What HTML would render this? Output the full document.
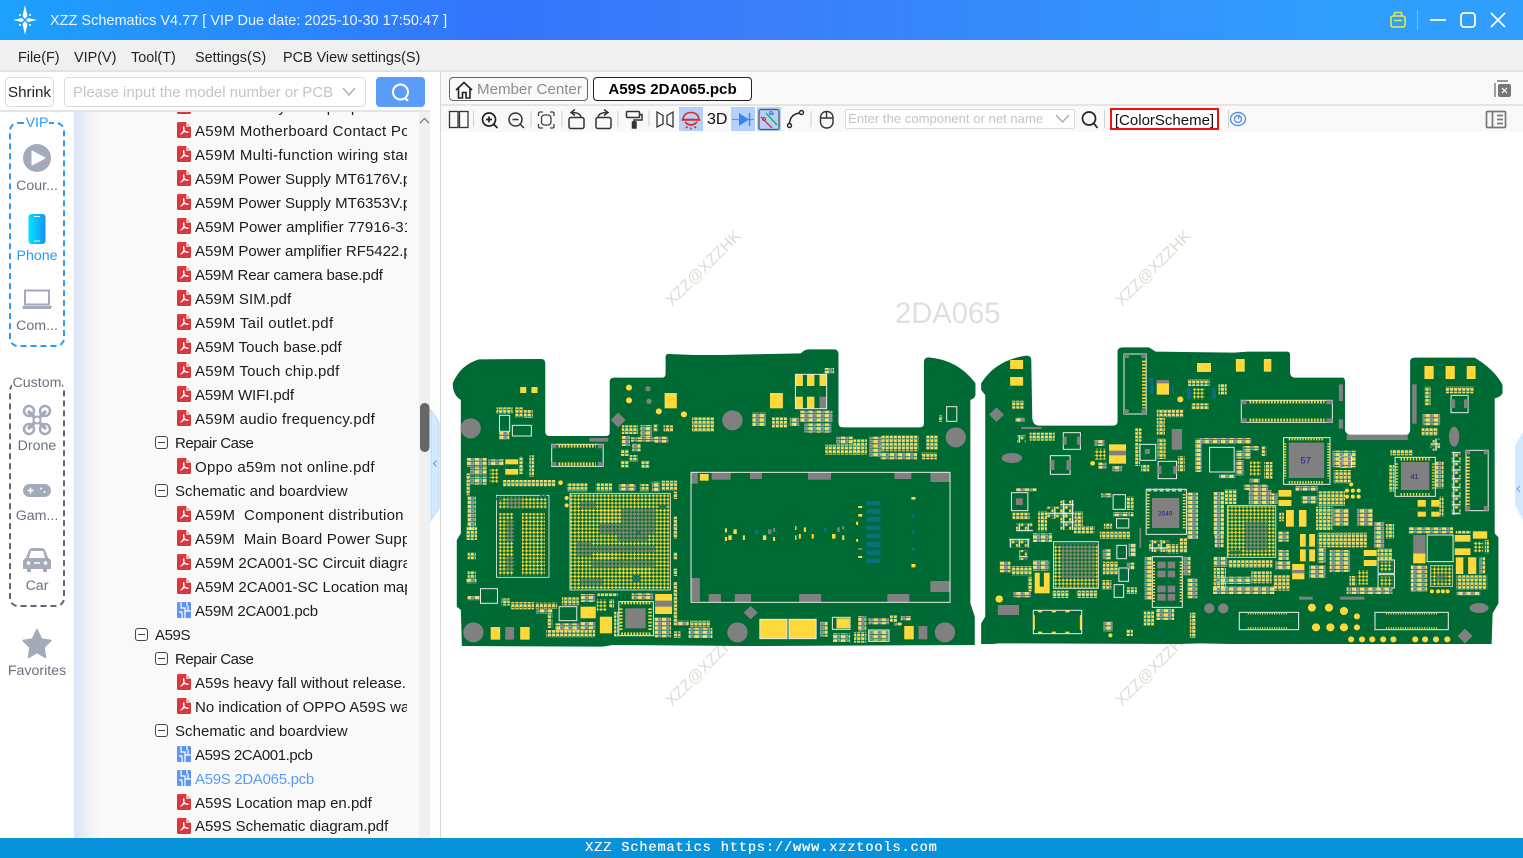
<!DOCTYPE html>
<html><head><meta charset="utf-8"><title>XZZ Schematics</title>
<style>
html,body{margin:0;padding:0;width:1523px;height:858px;overflow:hidden;background:#fff;font-family:"Liberation Sans","Noto Sans CJK SC",sans-serif;color:#222}
div,span{position:absolute;white-space:nowrap;box-sizing:border-box}
svg{position:absolute;left:0;top:0}
.m{top:48px;font-size:14.4px;line-height:20px;color:#222}
.r{left:0;font-size:15px;line-height:22px;color:#1c1c1c}
.n{font-size:14.2px;line-height:18px;width:74px;left:0;text-align:center;color:#69707f}
</style></head><body>
<!-- backgrounds -->
<div style="left:0;top:0;width:1523px;height:40px;background:linear-gradient(90deg,#1ca1fb 0,#3375fb 32%,#3a7ef8 50%,#2f9efd 88%,#2f9efd 100%)"></div>
<div style="left:0;top:40px;width:1523px;height:32px;background:#f0f0f0;border-bottom:2px solid #e2e2e2"></div>
<div style="left:0;top:72px;width:440px;height:40px;background:#fff;border-bottom:2px solid #e4e4e4"></div>
<div style="left:441px;top:72px;width:1082px;height:34px;background:#f9f9f9;border-bottom:2px solid #e4e4e4"></div>
<div style="left:441px;top:106px;width:1082px;height:26px;background:#f9f9f9"></div>
<div style="left:74px;top:112px;width:345px;height:726px;background:linear-gradient(90deg,#dbe4f4 0,#f2f4f8 18px,#f9f9f9 30px)"></div>
<div style="left:419px;top:112px;width:11px;height:726px;background:#f0f0f0"></div>
<div style="left:430px;top:72px;width:10px;height:766px;background:#fbfefb;"></div>
<div style="left:440px;top:72px;width:1px;height:766px;background:#d8d8d8"></div>
<div style="left:0;top:838px;width:1523px;height:20px;background:#0892d9"></div>
<!-- title -->
<div style="left:50px;top:11px;font-size:14.5px;line-height:20px;color:#eaf3ff">XZZ Schematics V4.77 [ VIP Due date: 2025-10-30 17:50:47 ]</div>
<!-- menu -->
<div class="m" style="left:18px">File(F)</div><div class="m" style="left:74px">VIP(V)</div><div class="m" style="left:131px">Tool(T)</div><div class="m" style="left:195px">Settings(S)</div><div class="m" style="left:283px">PCB View settings(S)</div>
<!-- search row -->
<div style="left:5px;top:77px;width:49px;height:30px;border:1px solid #ddd;border-radius:4px;font-size:15.2px;line-height:30px;text-align:center;color:#222">Shrink</div>
<div style="left:64px;top:77px;width:302px;height:30px;border:1px solid #ddd;border-radius:4px;font-size:15px;line-height:30px;padding-left:8px;color:#c0c4cc;background:#fff">Please input the model number or PCB</div>
<div style="left:376px;top:77px;width:49px;height:30px;border-radius:4px;background:#5a9cf8"></div>
<!-- tabs -->
<div style="left:449px;top:77px;width:139px;height:24px;border:1px solid #666;border-radius:4px;font-size:15.1px;line-height:23px;padding-left:27px;color:#8c8c8c">Member Center</div>
<div style="left:593px;top:77px;width:159px;height:24px;border:1px solid #222;border-radius:4px;font-size:15.1px;font-weight:bold;line-height:23px;text-align:center;color:#000;background:#fff">A59S 2DA065.pcb</div>
<!-- rail labels -->
<div style="left:9px;top:122px;width:56px;height:225px;border:2px dashed #2b9bf6;border-radius:9px"></div>
<div style="left:9px;top:382px;width:56px;height:225px;border:2px dashed #5f6678;border-radius:9px"></div>
<div class="n" style="top:114px;color:#2b9bf6;left:25px;width:24px;background:#fff">VIP</div>
<div class="n" style="top:374px;left:12px;width:50px;background:#fff">Custom</div>
<div class="n" style="top:177px">Cour...</div>
<div class="n" style="top:247px;color:#2b9bf6">Phone</div>
<div class="n" style="top:317px">Com...</div>
<div class="n" style="top:437px">Drone</div>
<div class="n" style="top:507px">Gam...</div>
<div class="n" style="top:577px">Car</div>
<div class="n" style="top:662px">Favorites</div>
<!-- tree -->
<div style="left:74px;top:112px;width:333px;height:726px;overflow:hidden">
<div style="left:0;top:-112px;width:333px;height:838px">
<div class="r" style="left:121px;top:97px">A59M Battery base pin.pdf</div>
<div class="r" style="left:121px;top:121px;letter-spacing:.3px">A59M Motherboard Contact Point.pdf</div>
<div class="r" style="left:121px;top:145px;letter-spacing:.3px">A59M Multi-function wiring stand.pdf</div>
<div class="r" style="left:121px;top:169px">A59M Power Supply MT6176V.pdf</div>
<div class="r" style="left:121px;top:193px">A59M Power Supply MT6353V.pdf</div>
<div class="r" style="left:121px;top:217px;letter-spacing:.1px">A59M Power amplifier 77916-31.pdf</div>
<div class="r" style="left:121px;top:241px">A59M Power amplifier RF5422.pdf</div>
<div class="r" style="left:121px;top:265px;letter-spacing:-.16px">A59M Rear camera base.pdf</div>
<div class="r" style="left:121px;top:289px;letter-spacing:.1px">A59M SIM.pdf</div>
<div class="r" style="left:121px;top:313px;letter-spacing:.35px">A59M Tail outlet.pdf</div>
<div class="r" style="left:121px;top:337px;letter-spacing:.1px">A59M Touch base.pdf</div>
<div class="r" style="left:121px;top:361px;letter-spacing:.25px">A59M Touch chip.pdf</div>
<div class="r" style="left:121px;top:385px;letter-spacing:-.08px">A59M WIFI.pdf</div>
<div class="r" style="left:121px;top:409px;letter-spacing:.25px">A59M audio frequency.pdf</div>
<div class="r" style="left:101px;top:433px;letter-spacing:-.45px">Repair Case</div>
<div class="r" style="left:121px;top:457px;letter-spacing:.3px">Oppo a59m not online.pdf</div>
<div class="r" style="left:101px;top:481px;letter-spacing:.04px">Schematic and boardview</div>
<div class="r" style="left:121px;top:505px;white-space:pre;letter-spacing:.25px">A59M  Component distribution map.pdf</div>
<div class="r" style="left:121px;top:529px;white-space:pre;letter-spacing:.2px">A59M  Main Board Power Supply.pdf</div>
<div class="r" style="left:121px;top:553px">A59M 2CA001-SC Circuit diagram.pdf</div>
<div class="r" style="left:121px;top:577px">A59M 2CA001-SC Location map.pdf</div>
<div class="r" style="left:121px;top:601px;letter-spacing:-.2px">A59M 2CA001.pcb</div>
<div class="r" style="left:81px;top:625px;letter-spacing:-.4px">A59S</div>
<div class="r" style="left:101px;top:649px;letter-spacing:-.45px">Repair Case</div>
<div class="r" style="left:121px;top:673px">A59s heavy fall without release.pdf</div>
<div class="r" style="left:121px;top:697px">No indication of OPPO A59S water.pdf</div>
<div class="r" style="left:101px;top:721px;letter-spacing:.04px">Schematic and boardview</div>
<div class="r" style="left:121px;top:745px;letter-spacing:-.4px">A59S 2CA001.pcb</div>
<div class="r" style="left:121px;top:769px;color:#5b9bf5;letter-spacing:-.3px">A59S 2DA065.pcb</div>
<div class="r" style="left:121px;top:793px">A59S Location map en.pdf</div>
<div class="r" style="left:121px;top:816px;letter-spacing:-.04px">A59S Schematic diagram.pdf</div>
</div></div>
<!-- toolbar text -->
<div style="left:707px;top:110px;font-size:16px;line-height:20px;color:#111">3D</div>
<div style="left:845px;top:109px;width:230px;height:20px;border:1px solid #ddd;border-radius:2px;background:#fff;font-size:13.1px;line-height:18px;padding-left:2px;color:#c4c4c4;overflow:hidden">Enter the component or net name</div>
<div style="left:1110px;top:108px;width:109px;height:22px;border:2px solid #f01010;font-size:15px;line-height:21px;text-align:center;color:#111;background:#fff">[ColorScheme]</div>
<!-- center watermark -->
<div style="left:895px;top:295px;font-size:29.2px;line-height:38px;color:#dfdfdf">2DA065</div>
<div style="left:654px;top:259px;width:100px;text-align:center;font-size:16px;line-height:20px;color:#dcdcd4;transform:rotate(-45deg)">XZZ@XZZHK</div>
<div style="left:1104px;top:259px;width:100px;text-align:center;font-size:16px;line-height:20px;color:#dcdcd4;transform:rotate(-45deg)">XZZ@XZZHK</div>
<div style="left:654px;top:659px;width:100px;text-align:center;font-size:16px;line-height:20px;color:#dcdcd4;transform:rotate(-45deg)">XZZ@XZZHK</div>
<div style="left:1104px;top:659px;width:100px;text-align:center;font-size:16px;line-height:20px;color:#dcdcd4;transform:rotate(-45deg)">XZZ@XZZHK</div>
<!-- footer -->
<div style="left:585px;top:839px;font-family:'Liberation Mono',monospace;font-size:14px;line-height:19px;color:#fff;letter-spacing:.87px;transform:scaleX(.975);transform-origin:0 0;width:362px;text-shadow:.3px 0 0 #fff">XZZ Schematics https://www.xzztools.com</div>

<svg width="1523" height="858" viewBox="0 0 1523 858" style="pointer-events:none">
<defs>
<clipPath id="tc"><rect x="74" y="112" width="340" height="726"/></clipPath>
<g id="pdf"><path d="M0 1.5Q0 0 1.5 0H9L14 5V14.5Q14 16 12.5 16H1.5Q0 16 0 14.5Z" fill="#d9363e"/><path d="M9 0V5H14Z" fill="#f2b0b0"/><path d="M3.5 12.5C6 11 7.5 7.5 7 5.2C6.6 4 6 5 6.6 6.8C7.2 8.6 9 10.5 11 10.5C11.8 10.3 10.5 9.6 9 9.8C7 10 4.5 11.3 3.5 12.5Z" fill="none" stroke="#fff" stroke-width="1"/></g>
<g id="pcbf"><rect width="14" height="16" rx="1.5" fill="#5b93f6"/><path d="M4 0V6H8V16M10 0V4M2 10H5V16M8 9H14M11 4V9" fill="none" stroke="#fff" stroke-width="1.2"/></g>
<g id="minus"><rect x=".5" y=".5" width="12" height="12" rx="2.5" fill="#fff" stroke="#444" stroke-width="1"/><path d="M3 6.5H10" stroke="#444" stroke-width="1"/></g>
<!-- PCB patterns -->
<pattern id="py" width="11" height="11" patternUnits="userSpaceOnUse"><path d="M5.5 1V10M1 5.5H10" stroke="#ffd83c" stroke-width="3.4"/></pattern>
<pattern id="pg" width="11" height="11" patternUnits="userSpaceOnUse"><path d="M5.5 1V10M1 5.5H10" stroke="#808080" stroke-width="3.4"/></pattern>
<pattern id="pt" width="11" height="11" patternUnits="userSpaceOnUse"><path d="M5.5 1V10M1 5.5H10" stroke="#08707e" stroke-width="3.4"/></pattern>
<pattern id="cv" width="12" height="22" patternUnits="userSpaceOnUse"><rect x="1" y="1" width="9" height="19" fill="#fff"/><rect x="2" y="2" width="7" height="7" fill="#ffd83c"/><rect x="2" y="12" width="7" height="7" fill="#ffd83c"/><rect x="2" y="9" width="7" height="3" fill="#006a35"/></pattern>
<pattern id="ch" width="24" height="13" patternUnits="userSpaceOnUse"><rect x="1" y="1" width="22" height="10" fill="#fff"/><rect x="2" y="2" width="9" height="8" fill="#ffd83c"/><rect x="13" y="2" width="9" height="8" fill="#808080"/></pattern>
<pattern id="cg" width="26" height="26" patternUnits="userSpaceOnUse"><rect x="1" y="1" width="24" height="24" fill="none" stroke="#eee" stroke-width="2"/><rect x="4" y="4" width="8" height="8" fill="#ffd83c"/><rect x="16" y="14" width="6" height="8" fill="#ffd83c"/><rect x="15" y="4" width="7" height="5" fill="#808080"/></pattern>
<linearGradient id="ph" x1="0" x2="1"><stop offset="0" stop-color="#00e5ff"/><stop offset="1" stop-color="#1e90fb"/></linearGradient>
</defs>

<!-- title icons -->
<g fill="#fff"><path d="M25 5L27.5 16L25 19L22.5 16Z M25 35L27.5 24L25 21L22.5 24Z M13 20L22 18L24 20L22 22Z M37 20L28 18L26 20L28 22Z"/><circle cx="20" cy="15" r="1"/><circle cx="30" cy="15" r="1"/><circle cx="20" cy="25" r="1"/><circle cx="30" cy="25" r="1"/></g>
<g fill="none" stroke="#e0e94a" stroke-width="1.6"><rect x="1391" y="16" width="14" height="11" rx="2"/><path d="M1394.500 16V13.500Q1394.500 12.500 1395.500 12.500H1400.500Q1401.500 12.500 1401.500 13.500V16M1394 20.500H1402"/></g>
<path d="M1417.500 10V30" stroke="#6fb8ff" stroke-width="1"/>
<g fill="none" stroke="#fff" stroke-width="1.700"><path d="M1430 20H1446"/><rect x="1461" y="13" width="14" height="14" rx="3"/><path d="M1491 13L1505 27M1505 13L1491 27"/></g>
<!-- search row icons -->
<path d="M343 88L349 95L355 88" fill="none" stroke="#b0b0b0" stroke-width="1.500"/>
<g fill="none" stroke="#fff" stroke-width="2"><circle cx="400.500" cy="92" r="7.500"/><path d="M405 98L408 101"/></g>
<!-- tabs icons -->
<path d="M456 90L464 82.500L472 90M458.500 88V98H462.500V92.500H466V98H470V88" fill="none" stroke="#222" stroke-width="1.600"/>
<path d="M1497 81H1508M1495 97V83" fill="none" stroke="#777" stroke-width="1.400"/><rect x="1498" y="84" width="13" height="13" rx="2" fill="#777"/><path d="M1502 88L1507 93M1507 88L1502 93" stroke="#fff" stroke-width="1.200"/>
<!-- toolbar icons -->
<rect x="679" y="107" width="24" height="24" fill="#b3d1fb"/><rect x="731" y="107" width="24" height="24" fill="#b3d1fb"/><rect x="757" y="107" width="24" height="24" fill="#b3d1fb"/>
<g stroke="#d0d0d0"><path d="M473.500 111V127M531 111V127M562 111V127M618 111V127M649 111V127M811 111V127M1104.500 110V128M1228.500 110V128"/></g>
<g fill="none" stroke="#333" stroke-width="1.300"><rect x="449.500" y="111.500" width="8.500" height="16"/><rect x="459.500" y="111.500" width="8.500" height="16"/></g>
<g fill="none" stroke="#222" stroke-width="1.700"><circle cx="489" cy="119.500" r="6.500"/><path d="M494 124.500L497.500 128M486 119.500H492M489 116.500V122.500"/></g>
<g fill="none" stroke="#333" stroke-width="1.500"><circle cx="515.500" cy="119.500" r="6.500"/><path d="M520.500 124.500L524 128M512.500 119.500H518.500"/></g>
<g fill="none" stroke="#444" stroke-width="1.300"><path d="M538.500 116V113.500Q538.500 112 540 112H543M550 112H552.500Q554 112 554 113.500V116M554 124V126.500Q554 128 552.500 128H550M543 128H540Q538.500 128 538.500 126.500V124"/><rect x="541.500" y="115" width="9.500" height="10" rx="3"/></g>
<g fill="none" stroke="#333" stroke-width="1.500"><rect x="569" y="117.500" width="15" height="11" rx="2"/><path d="M581 117Q580 112.500 572 112.500M575 109.500L571 112.500L575 115.500"/><rect x="596" y="117.500" width="15" height="11" rx="2"/><path d="M598 117Q599 112.500 607 112.500M604 109.500L608 112.500L604 115.500"/></g>
<g fill="none" stroke="#333" stroke-width="1.500"><rect x="626.500" y="111.500" width="13" height="6" rx="1"/><path d="M639.500 114.500H642V120H634V122"/><rect x="632.500" y="122" width="3.500" height="6" fill="#333"/></g>
<g fill="none" stroke="#333" stroke-width="1.300"><path d="M657 112L663 115.500V124L657 127Z M673 112L667 115.500V124L673 127Z"/></g>
<g fill="none" stroke="#e0281e" stroke-width="1.600"><path d="M683 119.500Q684 112.500 691 112.500Q698 112.500 699 119.500ZM681.500 120H700.500M685 122Q691 128 697 122M686 128L687.500 126.500M691 129.500V127.500M696 128L694.500 126.500"/></g>
<g><path d="M732 119.500H754" stroke="#5b95ea" stroke-width="1.200"/><path d="M739 113V126L749 119.500Z" fill="#3a86e8"/><path d="M749.500 113V126" stroke="#3a86e8" stroke-width="1.400"/></g>
<g fill="none"><rect x="759" y="109.500" width="20" height="20" rx="2" stroke="#555" stroke-width="1.200"/><path d="M761 117L772 128" stroke="#e02828" stroke-width="1.300"/><path d="M766 113L777 125" stroke="#22b14c" stroke-width="1.300"/><path d="M769 114H774" stroke="#3a7ce8" stroke-width="1.300"/><circle cx="771" cy="113" r="1.500" stroke="#3a7ce8"/><circle cx="764" cy="119" r="1.500" stroke="#e02828"/></g>
<g fill="none" stroke="#222" stroke-width="1.400"><path d="M789.500 124Q790 114 800 113"/><circle cx="789.500" cy="125.500" r="2"/><circle cx="801.500" cy="112.500" r="2"/></g>
<g fill="none" stroke="#333" stroke-width="1.400"><rect x="820.500" y="111.500" width="12.500" height="16.500" rx="6"/><path d="M820.500 118H833M826.500 111.500V118"/></g>
<path d="M1056 115L1062.500 122L1069 115" fill="none" stroke="#aaa" stroke-width="1.400"/>
<g fill="none" stroke="#222" stroke-width="1.700"><circle cx="1089" cy="118.500" r="6.500"/><path d="M1094 123.500L1097.500 128"/></g>
<g fill="none" stroke="#5a90e0" stroke-width="1.400"><ellipse cx="1238" cy="119" rx="7.500" ry="6.500"/><circle cx="1238" cy="119" r="3.500"/><path d="M1238 119L1239.500 116"/></g>
<g fill="none" stroke="#777" stroke-width="1.700"><rect x="1486.500" y="111.500" width="19" height="16" rx="1"/><path d="M1492.500 111.500V127.500M1497 115.500H1503M1497 119.500H1503M1497 123.500H1503"/></g>
<!-- rail icons -->
<circle cx="37" cy="158" r="14" fill="#a3aaba"/><path d="M32 151L45 158L32 165Z" fill="#fff" stroke="#fff" stroke-linejoin="round"/>
<rect x="28.500" y="214" width="17" height="30" rx="3" fill="url(#ph)"/><path d="M34 216.500H40M34 241H40" stroke="#d8f8ff" stroke-width="1"/>
<path d="M25 290.500H49V304.500H25Z" fill="none" stroke="#a3aaba" stroke-width="2"/><path d="M22 306H52L51 309H23Z" fill="#a3aaba"/>
<g stroke="#a3aaba" fill="none" stroke-width="3.500"><path d="M28 411L46 429M46 411L28 429"/></g>
<g fill="none" stroke="#a3aaba" stroke-width="2.500"><circle cx="29" cy="411" r="5"/><circle cx="45" cy="411" r="5"/><circle cx="29" cy="429" r="5"/><circle cx="45" cy="429" r="5"/></g><circle cx="37" cy="420" r="3.500" fill="#fff" stroke="#a3aaba" stroke-width="2"/>
<rect x="23" y="484" width="28" height="13" rx="6.500" fill="#a3aaba"/><path d="M27.500 490.500H33.500M30.500 487.500V493.500" stroke="#fff" stroke-width="1.500"/><circle cx="41" cy="488.500" r="1" fill="#fff"/><circle cx="44.500" cy="492" r="1" fill="#fff"/>
<path d="M26 558L29 550Q30 548 33 548H41Q44 548 45 550L48 558Q51 559 51 562V569H47V572H43V569H31V572H27V569H23V562Q23 559 26 558ZM29 558H45L43 551H31Z" fill="#a3aaba" fill-rule="evenodd"/><circle cx="28.500" cy="563" r="1.800" fill="#fff"/><circle cx="45.500" cy="563" r="1.800" fill="#fff"/><path d="M34 563H40" stroke="#fff" stroke-width="1.500"/>
<path d="M37 629.500L41.500 639L51 640.500L44 647.500L45.500 657.500L37 652.500L28.500 657.500L30 647.500L23 640.500L32.500 639Z" fill="#a3aaba" stroke="#a3aaba" stroke-width="1.500" stroke-linejoin="round"/>
<!-- scrollbar -->
<path d="M420 123L424.500 118.500L429 123" fill="none" stroke="#666" stroke-width="1"/>
<rect x="420" y="403" width="9.500" height="49" rx="4.700" fill="#666"/>
<path d="M431 410L439 422V508L431 520Z" fill="#d5e9fe" stroke="#b5d8fb" stroke-width="1"/>
<path d="M436.500 460.500L433.500 463.500L436.500 466.500" fill="none" stroke="#5da5f0" stroke-width="1.200"/>
<path d="M1523 432L1515 446V505L1523 520Z" fill="#d5e9fe"/><path d="M1520 486L1517 489L1520 492" fill="none" stroke="#5da5f0" stroke-width="1"/>
<!-- tree icons -->
<g clip-path="url(#tc)">
<use href="#pdf" x="177" y="98"/><use href="#pdf" x="177" y="122"/><use href="#pdf" x="177" y="146"/><use href="#pdf" x="177" y="170"/><use href="#pdf" x="177" y="194"/><use href="#pdf" x="177" y="218"/><use href="#pdf" x="177" y="242"/><use href="#pdf" x="177" y="266"/><use href="#pdf" x="177" y="290"/><use href="#pdf" x="177" y="314"/><use href="#pdf" x="177" y="338"/><use href="#pdf" x="177" y="362"/><use href="#pdf" x="177" y="386"/><use href="#pdf" x="177" y="410"/>
<use href="#minus" x="155" y="436"/><use href="#pdf" x="177" y="458"/><use href="#minus" x="155" y="484"/>
<use href="#pdf" x="177" y="506"/><use href="#pdf" x="177" y="530"/><use href="#pdf" x="177" y="554"/><use href="#pdf" x="177" y="578"/><use href="#pcbf" x="177" y="602"/>
<use href="#minus" x="135" y="628"/><use href="#minus" x="155" y="652"/><use href="#pdf" x="177" y="674"/><use href="#pdf" x="177" y="698"/><use href="#minus" x="155" y="724"/>
<use href="#pcbf" x="177" y="746"/><use href="#pcbf" x="177" y="770"/><use href="#pdf" x="177" y="794"/><use href="#pdf" x="177" y="818"/>
</g>

<!-- LEFT BOARD -->
<g transform="translate(450 340) scale(.339 .33333)">
<path d="M8 130Q30 75 85 58L270 57Q281 58 281 70V275Q281 288 295 288H460Q471 288 471 278V125Q471 113 485 113H625Q636 113 636 100V50Q636 42 645 42L720 45L800 45L1035 40Q1045 28 1060 28H1135Q1146 30 1146 42V250Q1146 262 1160 262H1385Q1398 262 1398 250V65Q1398 53 1412 52Q1500 60 1550 130V165Q1548 175 1535 180V790L1548 830V915L900 918L860 918L480 915L450 920L35 918L32 810L20 800V600L32 580V180Q8 165 8 130Z" fill="#006a35"/>
<g fill="#808080"><circle cx="61" cy="265" r="30"/><circle cx="1492" cy="292" r="30"/><circle cx="69" cy="877" r="30"/><circle cx="848" cy="877" r="30"/><circle cx="1460" cy="877" r="30"/><circle cx="833" cy="241" r="30"/><path d="M496 218L518 240L496 262L474 240Z M887 798L908 818L887 838L866 818Z"/><circle cx="584" cy="146" r="8"/><circle cx="587" cy="184" r="8"/><rect x="411" y="294" width="56" height="11"/>
<rect x="772" y="397" width="56" height="22"/><rect x="885" y="397" width="35" height="20"/><rect x="1056" y="397" width="68" height="22"/><rect x="1311" y="397" width="50" height="20"/><rect x="1417" y="397" width="58" height="29"/><rect x="711" y="397" width="20" height="34"/><rect x="711" y="714" width="26" height="70"/><rect x="763" y="762" width="36" height="25"/><rect x="840" y="762" width="48" height="25"/><rect x="1030" y="762" width="65" height="25"/><rect x="1290" y="762" width="65" height="25"/><rect x="1417" y="723" width="58" height="33"/>
<rect x="938" y="568" width="10" height="14"/><rect x="953" y="564" width="6" height="12"/><rect x="1142" y="562" width="8" height="14"/><rect x="1157" y="558" width="6" height="10"/><rect x="1204" y="624" width="12" height="6"/>
<rect x="163" y="861" width="26" height="38"/><rect x="1382" y="858" width="26" height="40"/><rect x="517" y="805" width="60" height="60"/></g>
<g fill="#ffd83c"><rect x="207" y="141" width="18" height="18"/><rect x="240" y="141" width="18" height="18"/><rect x="633" y="159" width="36" height="46"/><rect x="944" y="159" width="38" height="46"/><circle cx="528" cy="143" r="9"/><circle cx="528" cy="181" r="9"/><circle cx="616" cy="214" r="9"/><circle cx="690" cy="223" r="9"/><circle cx="326" cy="428" r="7"/><circle cx="344" cy="474" r="6"/><circle cx="344" cy="496" r="6"/>
<rect x="737" y="402" width="26" height="20"/><rect x="1204" y="498" width="12" height="6"/><rect x="1204" y="522" width="12" height="8"/><rect x="1198" y="545" width="6" height="10"/><rect x="1198" y="597" width="6" height="8"/><rect x="1204" y="648" width="12" height="6"/><rect x="1361" y="471" width="12" height="8"/><rect x="1361" y="672" width="12" height="10"/>
<rect x="811" y="565" width="6" height="12"/><rect x="836" y="568" width="10" height="14"/><rect x="1018" y="558" width="4" height="12"/><rect x="1044" y="562" width="6" height="14"/><rect x="811" y="591" width="6" height="12"/><rect x="821" y="586" width="10" height="14"/><rect x="864" y="586" width="6" height="14"/><rect x="923" y="586" width="10" height="14"/><rect x="953" y="591" width="6" height="12"/><rect x="1018" y="586" width="4" height="14"/><rect x="1029" y="582" width="6" height="14"/><rect x="1067" y="582" width="6" height="14"/><rect x="1127" y="582" width="10" height="14"/><rect x="1157" y="586" width="6" height="14"/>
<rect x="120" y="861" width="28" height="38"/><rect x="207" y="861" width="28" height="38"/><rect x="1340" y="858" width="28" height="40"/>
<rect x="914" y="838" width="80" height="58"/><rect x="1000" y="838" width="80" height="58"/>
<rect x="1019" y="103" width="22" height="35"/><rect x="1053" y="103" width="22" height="35"/><rect x="1090" y="103" width="21" height="35"/><rect x="1019" y="170" width="22" height="35"/><rect x="1053" y="170" width="22" height="35"/>
<rect x="163" y="358" width="38" height="46"/><rect x="605" y="762" width="50" height="60"/><rect x="1140" y="835" width="38" height="30"/><rect x="442" y="830" width="36" height="50"/><rect x="385" y="800" width="45" height="35"/></g>
<rect x="1090" y="170" width="21" height="35" fill="#808080"/><rect x="163" y="373" width="38" height="14" fill="#006a35"/><rect x="605" y="782" width="50" height="18" fill="#808080"/>
<g fill="#08707e"><rect x="1228" y="483" width="42" height="13"/><rect x="1228" y="507" width="42" height="14"/><rect x="1228" y="531" width="42" height="14"/><rect x="1228" y="557" width="42" height="13"/><rect x="1228" y="581" width="42" height="13"/><rect x="1228" y="606" width="42" height="15"/><rect x="1228" y="631" width="42" height="14"/><rect x="1228" y="656" width="42" height="13"/><rect x="1361" y="521" width="8" height="10"/><rect x="1361" y="571" width="8" height="10"/><rect x="1361" y="622" width="8" height="10"/><rect x="899" y="568" width="12" height="14"/><rect x="1104" y="562" width="8" height="14"/></g>
<g fill="none" stroke="#e8ece8" stroke-width="3"><rect x="711" y="397" width="764" height="390"/><rect x="1019" y="103" width="92" height="103"/><rect x="137" y="466" width="155" height="246" stroke-width="2.500"/><rect x="354" y="460" width="296" height="290" stroke-width="2.500"/><rect x="300" y="313" width="152" height="66"/><rect x="498" y="785" width="102" height="102"/><rect x="914" y="838" width="80" height="58"/><rect x="1000" y="838" width="80" height="58"/><rect x="146" y="226" width="30" height="48"/><rect x="184" y="256" width="56" height="32"/><rect x="1465" y="200" width="30" height="44"/><rect x="322" y="800" width="52" height="42"/><rect x="1128" y="832" width="52" height="36"/><rect x="1235" y="870" width="60" height="34"/><rect x="90" y="746" width="50" height="44"/></g>
<path d="M320 318H430" stroke="#ffd83c" stroke-width="10" stroke-dasharray="5 4"/><path d="M320 372H430" stroke="#ffd83c" stroke-width="10" stroke-dasharray="5 4"/>
<g fill="#808080"><rect x="300" y="313" width="14" height="12"/><rect x="436" y="313" width="16" height="12"/><rect x="300" y="366" width="14" height="12"/><rect x="436" y="366" width="16" height="12"/></g>
<!-- BGA -->
<rect x="144" y="470" width="142" height="36" fill="url(#py)"/><rect x="144" y="519" width="44" height="187" fill="url(#py)"/><rect x="212" y="519" width="68" height="187" fill="url(#py)"/>
<rect x="170" y="470" width="44" height="33" fill="url(#pg)"/><rect x="168" y="540" width="22" height="66" fill="url(#pg)"/><rect x="168" y="650" width="22" height="44" fill="url(#pg)"/><rect x="135" y="470" width="22" height="11" fill="url(#pt)"/><rect x="264" y="464" width="22" height="11" fill="url(#pt)"/>
<rect x="355" y="462" width="292" height="286" fill="url(#py)"/>
<rect x="440" y="506" width="165" height="77" fill="url(#pg)"/><rect x="495" y="572" width="88" height="33" fill="url(#pg)"/><rect x="418" y="616" width="187" height="22" fill="url(#pg)"/><rect x="418" y="660" width="187" height="22" fill="url(#pg)"/><rect x="385" y="484" width="44" height="22" fill="url(#pg)"/><rect x="385" y="715" width="66" height="22" fill="url(#pg)"/><rect x="374" y="605" width="44" height="44" fill="url(#pg)"/>
<rect x="440" y="506" width="66" height="44" fill="url(#py)"/><rect x="429" y="638" width="66" height="22" fill="url(#py)"/><rect x="495" y="682" width="99" height="22" fill="url(#py)"/><rect x="550" y="572" width="11" height="11" fill="url(#pt)"/><rect x="539" y="704" width="22" height="22" fill="url(#pt)"/><rect x="616" y="495" width="22" height="11" fill="url(#pt)"/>
<rect x="117" y="386" width="26" height="44" fill="url(#py)"/><rect x="433" y="778" width="30" height="36" fill="url(#py)"/>
<!-- chips -->
<rect x="137" y="202" width="48" height="20" fill="url(#cv)"/><rect x="192" y="202" width="24" height="30" fill="url(#cv)"/><rect x="218" y="210" width="26" height="24" fill="url(#cv)"/>
<rect x="145" y="276" width="30" height="24" fill="url(#ch)"/>
<rect x="507" y="256" width="48" height="26" fill="url(#cv)"/><rect x="562" y="255" width="34" height="36" fill="url(#ch)"/><rect x="600" y="253" width="14" height="22" fill="url(#cv)"/><rect x="630" y="256" width="28" height="20" fill="url(#cv)"/><rect x="507" y="288" width="24" height="30" fill="url(#ch)"/><rect x="534" y="292" width="70" height="13" fill="url(#ch)"/><rect x="604" y="290" width="40" height="18" fill="url(#ch)"/><rect x="538" y="310" width="24" height="24" fill="url(#ch)"/><rect x="503" y="328" width="24" height="20" fill="url(#cv)"/><rect x="530" y="345" width="24" height="20" fill="url(#cv)"/><rect x="503" y="362" width="24" height="20" fill="url(#cv)"/><rect x="565" y="362" width="24" height="22" fill="url(#cv)"/>
<rect x="714" y="232" width="66" height="44" fill="url(#cv)"/><rect x="892" y="218" width="40" height="40" fill="url(#ch)"/><rect x="950" y="232" width="45" height="32" fill="url(#cv)"/><rect x="1002" y="232" width="28" height="26" fill="url(#ch)"/><rect x="1033" y="212" width="96" height="34" fill="url(#ch)"/><rect x="1045" y="250" width="80" height="28" fill="url(#ch)"/><rect x="1105" y="84" width="28" height="16" fill="url(#ch)"/><rect x="1443" y="226" width="10" height="20" fill="url(#cv)"/>
<rect x="1107" y="314" width="100" height="30" fill="url(#cv)"/><rect x="1140" y="290" width="48" height="24" fill="url(#ch)"/><rect x="1190" y="298" width="40" height="46" fill="url(#cv)"/><rect x="1237" y="290" width="36" height="60" fill="url(#ch)"/><rect x="1272" y="286" width="110" height="48" fill="url(#cv)"/><rect x="1270" y="338" width="108" height="20" fill="url(#ch)"/><rect x="1405" y="286" width="34" height="44" fill="url(#cv)"/><rect x="1390" y="338" width="46" height="20" fill="url(#cv)"/>
<rect x="50" y="354" width="58" height="26" fill="url(#ch)"/><rect x="112" y="358" width="46" height="18" fill="url(#ch)"/><rect x="60" y="382" width="48" height="24" fill="url(#ch)"/><rect x="60" y="410" width="48" height="24" fill="url(#ch)"/><rect x="204" y="350" width="12" height="52" fill="url(#cv)"/><rect x="234" y="346" width="14" height="64" fill="url(#cv)"/><rect x="155" y="420" width="156" height="20" fill="url(#cv)"/><rect x="48" y="400" width="12" height="66" fill="url(#cv)"/><rect x="52" y="470" width="24" height="100" fill="url(#ch)"/><rect x="48" y="560" width="32" height="40" fill="url(#cv)"/><rect x="52" y="636" width="24" height="22" fill="url(#cv)"/><rect x="52" y="694" width="24" height="22" fill="url(#cv)"/><rect x="48" y="716" width="30" height="14" fill="url(#ch)"/>
<rect x="345" y="430" width="60" height="24" fill="url(#cv)"/><rect x="430" y="430" width="48" height="24" fill="url(#cv)"/><rect x="498" y="432" width="50" height="20" fill="url(#ch)"/><rect x="560" y="432" width="26" height="22" fill="url(#cv)"/><rect x="595" y="425" width="24" height="30" fill="url(#ch)"/><rect x="622" y="422" width="48" height="30" fill="url(#cv)"/><rect x="658" y="455" width="12" height="22" fill="url(#cv)"/><rect x="658" y="530" width="12" height="66" fill="url(#cv)"/><rect x="658" y="636" width="12" height="22" fill="url(#cv)"/><rect x="658" y="686" width="12" height="22" fill="url(#cv)"/><rect x="658" y="726" width="12" height="130" fill="url(#cv)"/>
<rect x="52" y="768" width="36" height="13" fill="url(#ch)"/><rect x="152" y="775" width="24" height="22" fill="url(#cv)"/><rect x="178" y="786" width="70" height="22" fill="url(#cv)"/><rect x="252" y="788" width="64" height="18" fill="url(#cv)"/><rect x="254" y="808" width="48" height="13" fill="url(#ch)"/><rect x="286" y="820" width="16" height="44" fill="url(#cv)"/>
<rect x="330" y="772" width="50" height="24" fill="url(#cv)"/><rect x="386" y="762" width="42" height="24" fill="url(#ch)"/><rect x="310" y="850" width="72" height="24" fill="url(#ch)"/><rect x="284" y="870" width="144" height="22" fill="url(#cv)"/><rect x="385" y="846" width="44" height="22" fill="url(#ch)"/><rect x="536" y="760" width="64" height="18" fill="url(#ch)"/><rect x="435" y="760" width="60" height="9" fill="url(#cv)"/><rect x="470" y="778" width="14" height="26" fill="url(#cv)"/><rect x="484" y="815" width="12" height="76" fill="url(#cv)"/><rect x="604" y="832" width="48" height="60" fill="url(#ch)"/><rect x="668" y="842" width="36" height="14" fill="url(#ch)"/><rect x="708" y="842" width="60" height="20" fill="url(#cv)"/><rect x="704" y="864" width="70" height="30" fill="url(#ch)"/><rect x="660" y="874" width="20" height="20" fill="url(#cv)"/>
<rect x="1092" y="844" width="22" height="46" fill="url(#ch)"/><rect x="1204" y="828" width="24" height="46" fill="url(#ch)"/><rect x="1235" y="835" width="60" height="18" fill="url(#ch)"/><rect x="1298" y="826" width="22" height="20" fill="url(#cv)"/><rect x="1330" y="828" width="30" height="13" fill="url(#ch)"/><rect x="1310" y="848" width="22" height="9" fill="url(#ch)"/><rect x="1130" y="880" width="50" height="26" fill="url(#ch)"/><rect x="1192" y="876" width="36" height="32" fill="url(#cv)"/><rect x="1235" y="872" width="58" height="30" fill="url(#ch)"/>
<path d="M505 788H595M505 882H595" stroke="#ffd83c" stroke-width="10" stroke-dasharray="5 4"/><path d="M504 805V870M590 805V870" stroke="#ffd83c" stroke-width="10" stroke-dasharray="5 5"/>
</g>

<!-- RIGHT BOARD -->
<g transform="translate(975 340) scale(.341 .33333)">
<path d="M18 130Q60 60 150 47Q165 47 165 60L168 235Q170 257 190 257H405Q417 257 418 245V35Q418 23 432 22H510L530 35L760 38L800 35H915Q924 35 924 45V100Q926 113 940 113H1072Q1085 110 1085 125V270Q1088 284 1102 285H1262Q1275 285 1276 270V65Q1276 53 1290 53H1465Q1525 90 1547 135V160Q1540 172 1524 175V580L1535 592V790L1518 820L1515 912H750L660 910L600 912L70 910L50 912H18V850L30 830V165L18 150Z" fill="#006a35"/>
<g fill="#808080"><rect x="1067" y="133" width="12" height="50"/><rect x="1067" y="238" width="12" height="28"/><rect x="1282" y="133" width="13" height="118"/><rect x="1090" y="284" width="179" height="16"/><rect x="577" y="267" width="30" height="62"/><ellipse cx="108" cy="354" rx="30" ry="15"/><ellipse cx="1405" cy="290" rx="15" ry="30"/><ellipse cx="1478" cy="804" rx="28" ry="15"/><circle cx="687" cy="805" r="15"/><circle cx="728" cy="805" r="15"/><path d="M63 202L85 224L63 246L41 224Z M1437 866L1459 888L1437 910L1415 888Z"/><rect x="67" y="795" width="62" height="30"/><rect x="135" y="261" width="60" height="6"/><rect x="950" y="770" width="40" height="9"/><rect x="1070" y="770" width="72" height="9"/><rect x="482" y="563" width="5" height="60"/>
<rect x="920" y="308" width="104" height="106"/><rect x="1249" y="366" width="83" height="84"/><rect x="519" y="474" width="80" height="90"/><rect x="120" y="475" width="20" height="20"/><rect x="498" y="327" width="15" height="15"/>
<rect x="535" y="665" width="24" height="20"/><rect x="565" y="665" width="22" height="20"/><rect x="535" y="692" width="24" height="20"/><rect x="565" y="692" width="22" height="20"/><rect x="535" y="737" width="24" height="20"/><rect x="565" y="737" width="22" height="20"/><rect x="535" y="762" width="24" height="20"/><rect x="565" y="762" width="22" height="20"/></g>
<g fill="#ffd83c"><rect x="103" y="60" width="38" height="27"/><rect x="103" y="111" width="38" height="26"/><rect x="651" y="69" width="41" height="27"/><rect x="765" y="57" width="26" height="38"/><rect x="847" y="57" width="22" height="38"/><rect x="1318" y="78" width="27" height="39"/><rect x="1380" y="78" width="27" height="39"/><rect x="1442" y="78" width="26" height="39"/><rect x="533" y="120" width="36" height="44"/><rect x="393" y="313" width="50" height="58"/><circle cx="71" cy="777" r="11"/><circle cx="602" cy="178" r="9"/><circle cx="345" cy="370" r="7"/>
<circle cx="988" cy="803" r="12"/><circle cx="1038" cy="803" r="12"/><circle cx="1082" cy="813" r="12"/><circle cx="1120" cy="829" r="9"/><circle cx="1000" cy="862" r="12"/><circle cx="1042" cy="862" r="12"/><circle cx="1082" cy="862" r="12"/><circle cx="1120" cy="862" r="9"/><circle cx="1103" cy="898" r="9"/><circle cx="1135" cy="898" r="9"/><circle cx="1165" cy="898" r="9"/><circle cx="1197" cy="898" r="9"/><circle cx="1227" cy="898" r="9"/><circle cx="1291" cy="898" r="9"/><circle cx="1320" cy="898" r="9"/><circle cx="1352" cy="898" r="9"/><circle cx="1385" cy="898" r="9"/><circle cx="397" cy="886" r="6"/>
<circle cx="1103" cy="433" r="6"/><circle cx="1091" cy="452" r="6"/><circle cx="1108" cy="452" r="6"/><circle cx="1125" cy="452" r="6"/><circle cx="1091" cy="470" r="6"/><circle cx="1108" cy="470" r="6"/><circle cx="1125" cy="470" r="6"/><circle cx="1340" cy="754" r="6"/><circle cx="1358" cy="754" r="6"/><circle cx="1372" cy="754" r="6"/><circle cx="1386" cy="754" r="6"/>
<rect x="912" y="510" width="60" height="50"/><rect x="953" y="582" width="44" height="38"/><rect x="953" y="628" width="44" height="36"/><rect x="1407" y="585" width="46" height="60"/><rect x="1410" y="652" width="60" height="50"/><rect x="1285" y="640" width="36" height="30"/><rect x="890" y="450" width="38" height="48"/><rect x="1140" y="630" width="38" height="48"/><rect x="930" y="672" width="36" height="46"/><rect x="1298" y="480" width="24" height="50"/><rect x="1338" y="480" width="24" height="50"/><rect x="1460" y="574" width="42" height="22"/><rect x="175" y="698" width="44" height="62"/></g>
<rect x="393" y="332" width="50" height="14" fill="#808080"/><rect x="533" y="120" width="36" height="10" fill="#808080"/><rect x="1285" y="585" width="36" height="55" fill="#808080"/><rect x="935" y="510" width="15" height="50" fill="#006a35"/><rect x="970" y="582" width="10" height="38" fill="#006a35"/><rect x="970" y="628" width="10" height="36" fill="#006a35"/><rect x="1407" y="605" width="46" height="20" fill="#006a35"/><rect x="1432" y="652" width="14" height="50" fill="#006a35"/><rect x="1298" y="500" width="24" height="15" fill="#006a35"/><rect x="1338" y="500" width="24" height="15" fill="#006a35"/><rect x="190" y="698" width="12" height="42" fill="#006a35"/><rect x="1140" y="648" width="38" height="12" fill="#006a35"/><rect x="890" y="470" width="38" height="10" fill="#006a35"/><rect x="930" y="690" width="36" height="10" fill="#808080"/>
<g fill="#08707e"><rect x="514" y="113" width="8" height="50"/><rect x="577" y="138" width="6" height="22"/><rect x="622" y="143" width="12" height="34"/><rect x="696" y="143" width="10" height="34"/></g>
<g fill="none" stroke="#e8ece8" stroke-width="3"><rect x="437" y="42" width="65" height="180"/><rect x="781" y="181" width="267" height="66"/><rect x="905" y="293" width="136" height="140"/><rect x="1232" y="352" width="118" height="117"/><rect x="502" y="448" width="118" height="135"/><rect x="520" y="650" width="88" height="152"/><rect x="775" y="817" width="174" height="52"/><rect x="1173" y="817" width="215" height="52"/><rect x="171" y="811" width="142" height="70"/><rect x="1440" y="331" width="65" height="181"/><rect x="259" y="278" width="50" height="50"/><rect x="221" y="347" width="58" height="56"/><rect x="537" y="364" width="54" height="52"/><rect x="1396" y="166" width="50" height="52"/><rect x="688" y="322" width="72" height="74"/><rect x="484" y="313" width="46" height="48"/><rect x="107" y="458" width="48" height="54"/><rect x="1326" y="585" width="76" height="80"/><rect x="230" y="605" width="132" height="140" stroke-width="2.500"/><rect x="740" y="497" width="142" height="155" stroke-width="2.500"/><rect x="1336" y="676" width="64" height="64" stroke-width="2"/><rect x="1182" y="660" width="48" height="40"/><rect x="1182" y="704" width="48" height="40"/><rect x="405" y="464" width="36" height="44"/><rect x="416" y="616" width="28" height="40"/><rect x="422" y="684" width="28" height="40"/><rect x="408" y="734" width="28" height="38"/><rect x="415" y="536" width="36" height="28"/><rect x="1070" y="348" width="34" height="34"/></g>
<g fill="#808080"><rect x="259" y="290" width="10" height="24"/><rect x="299" y="290" width="10" height="24"/><rect x="221" y="360" width="12" height="30"/><rect x="268" y="360" width="12" height="30"/><rect x="537" y="378" width="10" height="24"/><rect x="581" y="378" width="10" height="24"/><rect x="1396" y="178" width="12" height="26"/><rect x="1434" y="178" width="12" height="26"/><rect x="1074" y="355" width="26" height="18"/></g>
<g stroke="#ffd83c" fill="none"><path d="M495 62V205" stroke-width="10" stroke-dasharray="5 5"/><path d="M805 186H1025M805 240H1025" stroke-width="9" stroke-dasharray="5 4"/><path d="M920 297H1020M920 427H1020M909 310V415M1037 310V415" stroke-width="8" stroke-dasharray="4 4"/><path d="M1248 358H1335M1248 463H1335M1237 370V450M1344 370V450" stroke-width="8" stroke-dasharray="4 5"/><path d="M508 462V570M613 462V570" stroke-width="8" stroke-dasharray="4 5"/><path d="M505 450H615" stroke-width="9" stroke-dasharray="12 6" stroke="#ccc"/><path d="M524 665V790M604 665V790" stroke-width="8" stroke-dasharray="4 5"/><path d="M800 821H915M800 864H915M1205 821H1355M1205 864H1355" stroke-width="5" stroke-dasharray="3 4"/><path d="M1446 350V495" stroke-width="10" stroke-dasharray="5 5"/><path d="M185 814H305M185 878H305" stroke-width="6" stroke-dasharray="12 28"/><path d="M173 825V870M310 825V870" stroke-width="5"/></g>
<g fill="#808080"><rect x="437" y="42" width="14" height="12"/><rect x="488" y="42" width="14" height="12"/><rect x="437" y="208" width="14" height="14"/><rect x="488" y="208" width="14" height="14"/><rect x="781" y="181" width="16" height="12"/><rect x="1030" y="181" width="18" height="12"/><rect x="781" y="235" width="16" height="12"/><rect x="1030" y="235" width="18" height="12"/><rect x="1440" y="331" width="12" height="12"/><rect x="1492" y="331" width="13" height="12"/><rect x="1440" y="498" width="12" height="14"/><rect x="1492" y="498" width="13" height="14"/></g>
<!-- BGA -->
<rect x="232" y="607" width="128" height="136" fill="url(#py)"/><rect x="250" y="618" width="99" height="99" fill="url(#pg)"/><rect x="232" y="607" width="132" height="11" fill="url(#pt)"/>
<rect x="742" y="499" width="138" height="151" fill="url(#py)"/><rect x="792" y="544" width="66" height="88" fill="url(#pg)"/><rect x="748" y="632" width="33" height="11" fill="url(#pt)"/>
<rect x="1338" y="678" width="60" height="60" fill="url(#py)"/><rect x="1349" y="700" width="33" height="22" fill="url(#pg)"/>
<rect x="350" y="326" width="33" height="33" fill="url(#py)"/><rect x="806" y="364" width="33" height="44" fill="url(#py)"/><rect x="1124" y="690" width="28" height="44" fill="url(#py)"/><rect x="1462" y="604" width="28" height="33" fill="url(#py)"/><rect x="1188" y="665" width="36" height="30" fill="url(#py)"/><rect x="1188" y="710" width="36" height="30" fill="url(#py)"/><rect x="640" y="145" width="33" height="33" fill="url(#py)"/>
<!-- chips -->
<rect x="108" y="182" width="36" height="24" fill="url(#cv)"/><rect x="118" y="232" width="28" height="13" fill="url(#ch)"/><rect x="160" y="278" width="74" height="24" fill="url(#cv)"/><rect x="124" y="286" width="24" height="22" fill="url(#cg)"/>
<rect x="624" y="118" width="64" height="20" fill="url(#cv)"/><rect x="634" y="190" width="52" height="18" fill="url(#cv)"/><rect x="714" y="132" width="24" height="32" fill="url(#cv)"/><rect x="533" y="208" width="78" height="24" fill="url(#cv)"/><rect x="533" y="234" width="24" height="50" fill="url(#cv)"/><rect x="470" y="265" width="18" height="40" fill="url(#cv)"/><rect x="535" y="295" width="24" height="62" fill="url(#cv)"/><rect x="350" y="300" width="30" height="18" fill="url(#ch)"/><rect x="362" y="368" width="24" height="18" fill="url(#ch)"/><rect x="402" y="378" width="30" height="16" fill="url(#ch)"/><rect x="595" y="348" width="20" height="46" fill="url(#cv)"/><rect x="470" y="308" width="14" height="70" fill="url(#cv)"/><rect x="487" y="374" width="24" height="22" fill="url(#cv)"/>
<rect x="645" y="296" width="20" height="100" fill="url(#ch)"/><rect x="660" y="294" width="150" height="18" fill="url(#ch)"/><rect x="765" y="332" width="44" height="24" fill="url(#ch)"/><rect x="764" y="360" width="24" height="46" fill="url(#ch)"/><rect x="840" y="318" width="14" height="30" fill="url(#cv)"/><rect x="848" y="366" width="24" height="50" fill="url(#cv)"/><rect x="715" y="402" width="48" height="13" fill="url(#ch)"/><rect x="785" y="318" width="48" height="13" fill="url(#ch)"/><rect x="805" y="414" width="30" height="14" fill="url(#ch)"/><rect x="788" y="434" width="72" height="16" fill="url(#ch)"/>
<rect x="803" y="450" width="66" height="44" fill="url(#ch)"/><rect x="870" y="460" width="18" height="32" fill="url(#ch)"/><rect x="700" y="456" width="30" height="130" fill="url(#ch)"/><rect x="732" y="448" width="36" height="44" fill="url(#cv)"/><rect x="703" y="576" width="26" height="46" fill="url(#ch)"/><rect x="700" y="650" width="40" height="30" fill="url(#ch)"/><rect x="700" y="684" width="36" height="60" fill="url(#cv)"/><rect x="742" y="660" width="130" height="24" fill="url(#cv)"/><rect x="708" y="710" width="100" height="22" fill="url(#ch)"/><rect x="810" y="694" width="60" height="36" fill="url(#cv)"/><rect x="698" y="738" width="180" height="24" fill="url(#ch)"/><rect x="875" y="706" width="48" height="46" fill="url(#cv)"/><rect x="880" y="664" width="44" height="26" fill="url(#ch)"/><rect x="890" y="575" width="30" height="30" fill="url(#ch)"/><rect x="890" y="630" width="30" height="30" fill="url(#ch)"/><rect x="892" y="518" width="14" height="26" fill="url(#cv)"/><rect x="980" y="675" width="48" height="40" fill="url(#ch)"/>
<rect x="940" y="438" width="66" height="14" fill="url(#ch)"/><rect x="958" y="468" width="44" height="22" fill="url(#ch)"/><rect x="1005" y="454" width="80" height="44" fill="url(#cv)"/><rect x="1000" y="500" width="48" height="70" fill="url(#cv)"/><rect x="1048" y="505" width="48" height="52" fill="url(#ch)"/><rect x="1120" y="505" width="46" height="52" fill="url(#ch)"/><rect x="1005" y="578" width="144" height="44" fill="url(#cv)"/><rect x="1005" y="624" width="24" height="44" fill="url(#ch)"/><rect x="1040" y="630" width="60" height="66" fill="url(#ch)"/><rect x="1170" y="545" width="30" height="80" fill="url(#ch)"/><rect x="1205" y="552" width="24" height="44" fill="url(#cv)"/><rect x="1180" y="625" width="44" height="34" fill="url(#cv)"/><rect x="1090" y="742" width="135" height="20" fill="url(#ch)"/><rect x="1098" y="708" width="20" height="30" fill="url(#cv)"/><rect x="1048" y="332" width="68" height="50" fill="url(#ch)"/><rect x="1052" y="390" width="50" height="40" fill="url(#cv)"/>
<rect x="1218" y="328" width="66" height="18" fill="url(#cv)"/><rect x="1215" y="375" width="14" height="80" fill="url(#cv)"/><rect x="1352" y="365" width="22" height="80" fill="url(#ch)"/><rect x="1362" y="470" width="12" height="60" fill="url(#cv)"/><rect x="1398" y="335" width="26" height="190" fill="url(#cg)"/><rect x="1312" y="222" width="52" height="34" fill="url(#ch)"/><rect x="1310" y="262" width="48" height="26" fill="url(#cv)"/><rect x="1336" y="296" width="28" height="36" fill="url(#cg)"/><rect x="1318" y="140" width="18" height="56" fill="url(#cv)"/><rect x="1380" y="140" width="82" height="20" fill="url(#cv)"/>
<rect x="1272" y="562" width="130" height="18" fill="url(#ch)"/><rect x="1278" y="676" width="48" height="80" fill="url(#ch)"/><rect x="1412" y="706" width="90" height="44" fill="url(#cv)"/><rect x="1410" y="572" width="44" height="9" fill="url(#cv)"/><rect x="1478" y="652" width="18" height="50" fill="url(#ch)"/><rect x="1495" y="600" width="12" height="40" fill="url(#cv)"/><rect x="1412" y="755" width="70" height="12" fill="url(#ch)"/>
<rect x="370" y="460" width="30" height="12" fill="url(#ch)"/><rect x="405" y="516" width="60" height="13" fill="url(#ch)"/><rect x="445" y="470" width="20" height="40" fill="url(#cv)"/><rect x="378" y="550" width="24" height="16" fill="url(#cv)"/><rect x="366" y="575" width="90" height="22" fill="url(#cv)"/><rect x="374" y="628" width="24" height="30" fill="url(#ch)"/><rect x="450" y="610" width="22" height="40" fill="url(#ch)"/><rect x="375" y="665" width="44" height="40" fill="url(#cv)"/><rect x="445" y="668" width="22" height="22" fill="url(#ch)"/><rect x="445" y="742" width="30" height="20" fill="url(#cv)"/><rect x="374" y="720" width="26" height="30" fill="url(#cv)"/><rect x="376" y="844" width="28" height="30" fill="url(#ch)"/><rect x="443" y="868" width="20" height="20" fill="url(#cv)"/>
<rect x="110" y="518" width="50" height="20" fill="url(#cv)"/><rect x="120" y="445" width="60" height="10" fill="url(#ch)"/><rect x="120" y="550" width="50" height="24" fill="url(#cg)"/><rect x="185" y="514" width="26" height="60" fill="url(#cv)"/><rect x="210" y="500" width="60" height="36" fill="url(#cg)"/><rect x="250" y="480" width="40" height="90" fill="url(#cg)"/><rect x="292" y="514" width="24" height="44" fill="url(#cv)"/><rect x="290" y="558" width="60" height="22" fill="url(#cv)"/><rect x="170" y="580" width="56" height="26" fill="url(#ch)"/><rect x="100" y="596" width="60" height="26" fill="url(#cg)"/><rect x="130" y="630" width="24" height="30" fill="url(#cg)"/><rect x="72" y="665" width="32" height="32" fill="url(#ch)"/><rect x="106" y="678" width="60" height="28" fill="url(#cv)"/><rect x="170" y="660" width="48" height="32" fill="url(#ch)"/><rect x="112" y="756" width="52" height="16" fill="url(#ch)"/><rect x="226" y="752" width="48" height="22" fill="url(#cv)"/><rect x="298" y="752" width="60" height="22" fill="url(#cv)"/><rect x="155" y="710" width="12" height="44" fill="url(#cv)"/>
<rect x="510" y="600" width="60" height="36" fill="url(#cg)"/><rect x="560" y="612" width="36" height="28" fill="url(#cv)"/><rect x="600" y="595" width="22" height="44" fill="url(#cv)"/><rect x="612" y="650" width="20" height="56" fill="url(#ch)"/><rect x="622" y="715" width="30" height="60" fill="url(#ch)"/><rect x="622" y="458" width="32" height="140" fill="url(#ch)"/><rect x="497" y="650" width="22" height="130" fill="url(#ch)"/><rect x="495" y="812" width="30" height="46" fill="url(#cv)"/><rect x="532" y="806" width="52" height="34" fill="url(#ch)"/><rect x="630" y="818" width="18" height="76" fill="url(#cv)"/>
<text x="970" y="371" font-family="Liberation Sans,sans-serif" font-size="28" fill="#1a1a9c" text-anchor="middle">57</text>
<text x="1289" y="417" font-family="Liberation Sans,sans-serif" font-size="22" fill="#1a1a9c" text-anchor="middle">41</text>
<text x="558" y="527" font-family="Liberation Sans,sans-serif" font-size="19" fill="#1a1a9c" text-anchor="middle">3549</text>
</g>
</svg>
</body></html>
